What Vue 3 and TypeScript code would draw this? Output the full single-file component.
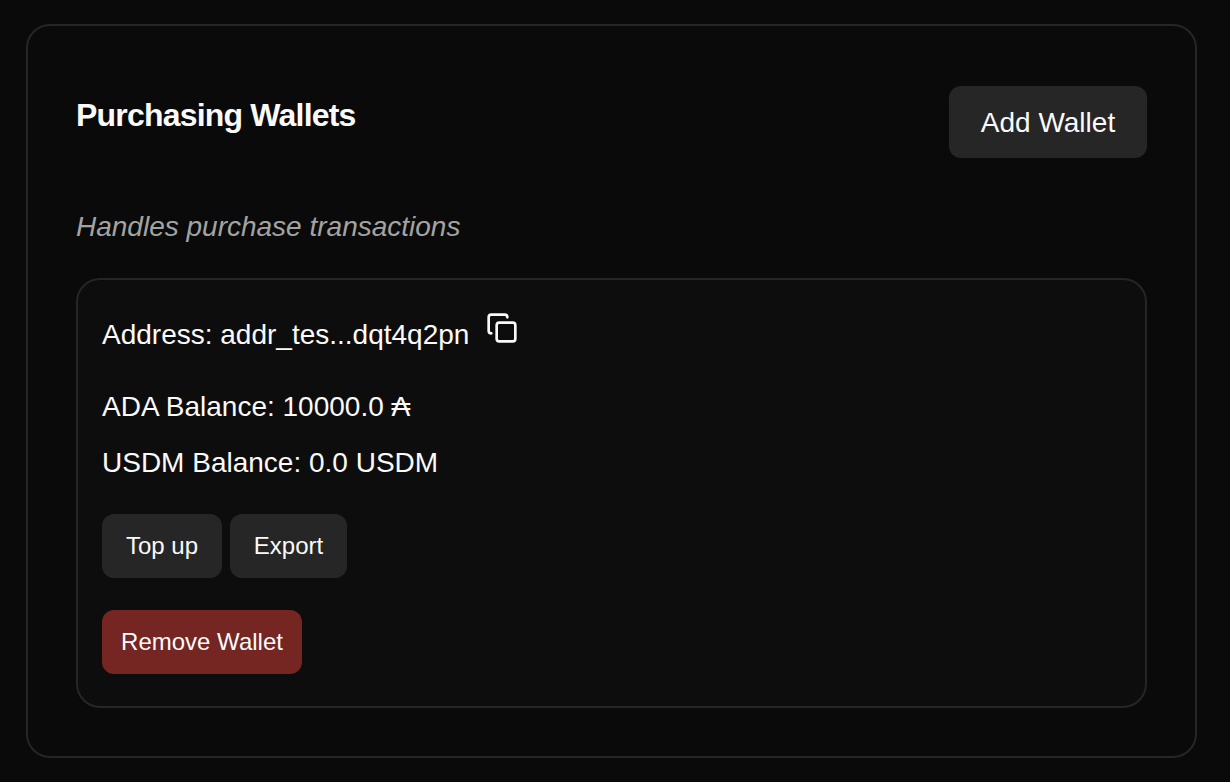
<script setup lang="ts">
interface Wallet {
  address: string
  ada: string
  usdm: string
}

const wallet: Wallet = { address: 'addr_tes...dqt4q2pn', ada: '10000.0', usdm: '0.0' }
</script>

<template>
  <main class="page">
    <section class="panel">
      <header class="head">
        <h2>Purchasing Wallets</h2>
        <button class="btn add">Add Wallet</button>
      </header>
      <p class="description">Handles purchase transactions</p>
      <article class="wallet">
        <div class="address">
          <span>Address: {{ wallet.address }}</span>
          <button class="copy" aria-label="Copy address">
            <svg viewBox="0 0 24 24" width="32" height="32" fill="none" stroke="currentColor" stroke-width="2" stroke-linecap="round" stroke-linejoin="round">
              <rect width="14" height="14" x="8" y="8" rx="2" ry="2" />
              <path d="M4 16c-1.1 0-2-.9-2-2V4c0-1.1.9-2 2-2h10c1.1 0 2 .9 2 2" />
            </svg>
          </button>
        </div>
        <div class="ada">ADA Balance: {{ wallet.ada }} ₳</div>
        <div class="usdm">USDM Balance: {{ wallet.usdm }} USDM</div>
        <div class="actions">
          <button class="btn topup">Top up</button>
          <button class="btn export">Export</button>
        </div>
        <button class="btn remove">Remove Wallet</button>
      </article>
    </section>
  </main>
</template>

<style>
body {
  background: #0a0a0a;
}
</style>

<style scoped>
* {
  box-sizing: border-box;
}
.page {
  height: 782px;
  padding: 24px 33px 24px 26px;
  background: #0a0a0a;
  color: #fafafa;
  font-family: "Liberation Sans", Arial, sans-serif;
  font-size: 28px;
  line-height: 40px;
}
.panel {
  height: 734px;
  padding: 60px 48px 48px;
  border: 2px solid #262626;
  border-radius: 24px;
}
.head {
  display: flex;
  justify-content: space-between;
  align-items: flex-start;
  height: 72px;
}
h2 {
  margin: 7px 0 0;
  font-size: 32px;
  line-height: 44px;
  letter-spacing: -0.8px;
  white-space: nowrap;
}
button {
  display: block;
  margin: 0;
  padding: 0;
  border: 0;
  background: none;
  color: inherit;
  font: inherit;
}
.btn {
  border-radius: 12px;
  background: #262626;
  white-space: nowrap;
}
.add {
  width: 198px;
  height: 72px;
  padding-top: 2px;
}
.description {
  margin: 49px 0 0;
  color: #a3a3a3;
  font-style: italic;
}
.wallet {
  height: 430px;
  margin-top: 31px;
  padding: 32px 24px;
  border: 2px solid #262626;
  border-radius: 24px;
  background: #0d0d0d;
}
.address {
  display: flex;
  height: 56px;
  padding-top: 3px;
  white-space: nowrap;
}
.copy {
  width: 32px;
  height: 32px;
  margin: -3px 0 0 17px;
}
.copy svg {
  display: block;
}
.ada {
  margin-top: 19px;
}
.usdm {
  margin-top: 16px;
}
.actions {
  display: flex;
  gap: 8px;
  margin-top: 31px;
}
.actions .btn,
.remove {
  height: 64px;
  font-size: 24px;
}
.topup {
  width: 120px;
}
.export {
  width: 117px;
}
.remove {
  width: 200px;
  margin-top: 32px;
  background: #752522;
}
</style>
